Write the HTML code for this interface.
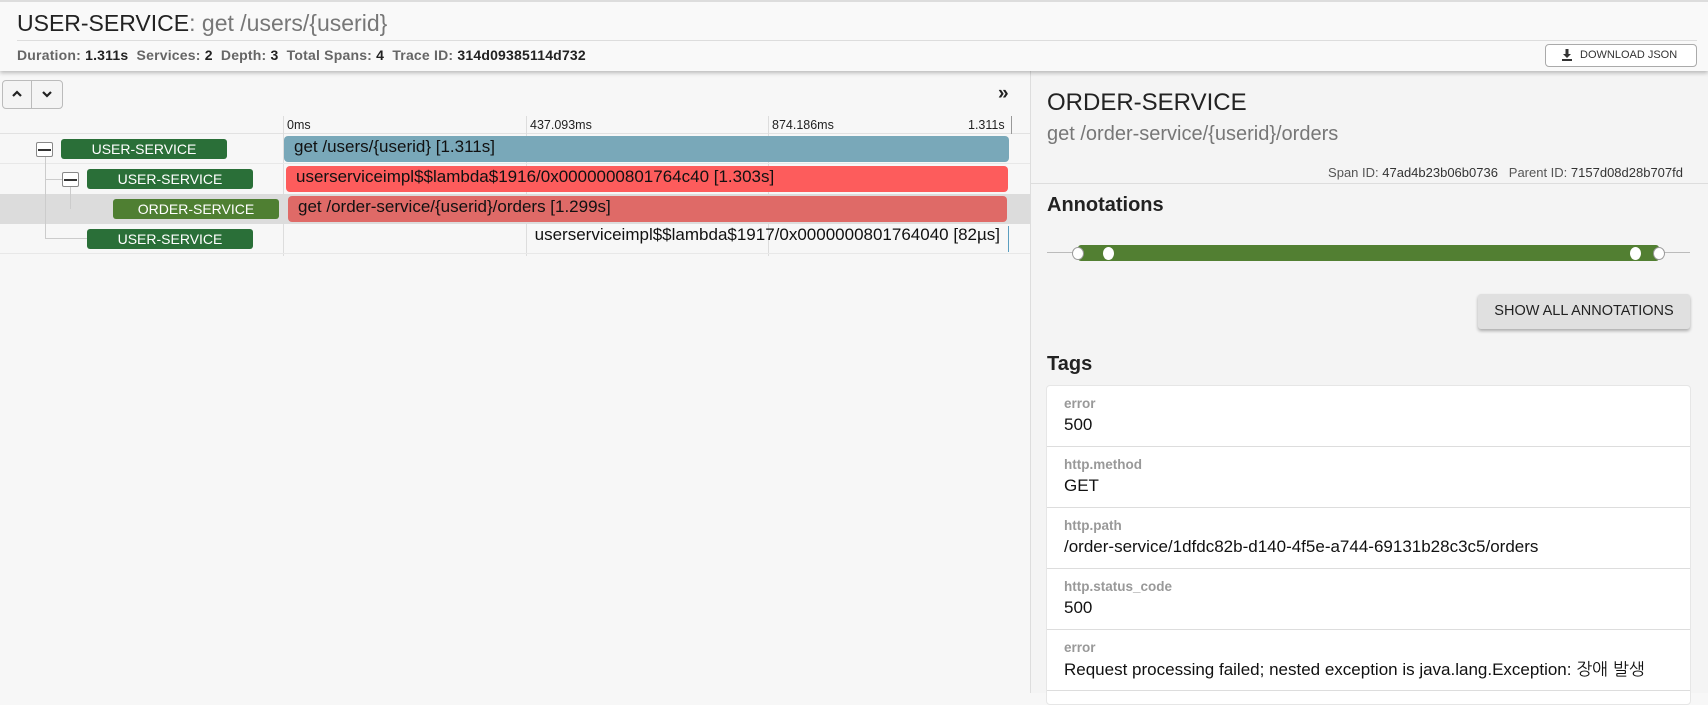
<!DOCTYPE html>
<html><head><meta charset="utf-8"><style>
*{box-sizing:border-box;margin:0;padding:0}
body{width:1708px;height:693px;overflow:hidden;background:#f7f7f7;font-family:"Liberation Sans","NanumGothic",sans-serif;color:#222;position:relative}
.a{position:absolute}
.hdr{left:0;top:0;width:1708px;height:71px;background:#f9f9f9;border-top:2px solid #ddd;box-shadow:0 2px 4px rgba(0,0,0,.25);z-index:2}
.lbl{height:20px;border-radius:3px;color:#fff;font-size:14px;text-align:center;line-height:20px;background:#2a6f38}
.box{width:17px;height:15px;border:1px solid #888;background:#fff;border-radius:2px}
.box:after{content:"";position:absolute;left:1px;right:1px;top:6px;height:2px;background:#333}
.bar{height:26px;border-radius:4px;font-size:17px;line-height:22px;padding-left:10px;color:#111;white-space:nowrap}
.tl{font-size:12.5px;color:#222}
.row{height:61px;border-bottom:1px solid #ddd;padding:10px 0 0 17px;position:relative}
.row .k{font-size:13.5px;color:#999;font-weight:bold}
.row .v{font-size:17px;color:#111;margin-top:4px;white-space:nowrap}
</style></head><body>
<div class="a hdr">
 <div class="a" style="left:17px;top:8px;font-size:23px;color:#222">USER-SERVICE<span style="color:#777">: get /users/{userid}</span></div>
 <div class="a" style="left:17px;top:38px;width:1680px;height:1px;background:#ddd"></div>
 <div class="a" style="left:17px;top:45px;font-size:14px;color:#666;font-weight:bold;white-space:nowrap;letter-spacing:.2px">Duration: <span style="color:#222">1.311s</span>&nbsp; Services: <span style="color:#222">2</span>&nbsp; Depth: <span style="color:#222">3</span>&nbsp; Total Spans: <span style="color:#222">4</span>&nbsp; Trace ID: <span style="color:#222">314d09385114d732</span></div>
 <div class="a" style="left:1545px;top:42px;width:152px;height:23px;border:1px solid #aaa;border-radius:4px;background:#fff;font-size:11px;line-height:21px;padding-left:34px;color:#333">DOWNLOAD JSON</div>
 <svg class="a" style="left:1562px;top:47px" width="10" height="12" viewBox="0 0 10 12"><path d="M3.5 0h3v5h2.5L5 9 1 5h2.5z M0 10h10v2H0z" fill="#333"/></svg>
</div>
<div class="a" style="left:0;top:71px;width:1030px;height:622px;background:#f7f7f7"></div>
<div class="a" style="left:2px;top:80px;width:61px;height:29px;border:1px solid #bbb;border-radius:4px;background:#f4f4f4"></div>
<div class="a" style="left:31px;top:80px;width:1px;height:29px;background:#bbb"></div>
<svg class="a" style="left:11px;top:89px" width="12" height="10"><path d="M2 7l4-4 4 4" stroke="#222" stroke-width="2.2" fill="none"/></svg>
<svg class="a" style="left:41px;top:89px" width="12" height="10"><path d="M2 3l4 4 4-4" stroke="#222" stroke-width="2.2" fill="none"/></svg>
<div class="a" style="left:998px;top:83px;font-size:19px;font-weight:bold;color:#222">»</div>
<div class="a" style="left:0;top:133px;width:1030px;height:1px;background:#e2e2e2"></div>
<div class="a" style="left:283px;top:116px;width:1px;height:140px;background:#ddd"></div>
<div class="a" style="left:526px;top:116px;width:1px;height:140px;background:#ddd"></div>
<div class="a" style="left:768px;top:116px;width:1px;height:140px;background:#ddd"></div>
<div class="a" style="left:1011px;top:116px;width:1px;height:18px;background:#999"></div>
<div class="a tl" style="left:287px;top:118px">0ms</div>
<div class="a tl" style="left:530px;top:118px">437.093ms</div>
<div class="a tl" style="left:772px;top:118px">874.186ms</div>
<div class="a tl" style="left:968px;top:118px">1.311s</div>
<div class="a" style="left:0;top:194px;width:1030px;height:30px;background:#dcdcdc"></div>
<div class="a" style="left:0;top:163px;width:1030px;height:1px;background:#e8e8e8"></div>
<div class="a" style="left:0;top:253px;width:1030px;height:1px;background:#e8e8e8"></div>
<div class="a" style="left:45px;top:157px;width:1px;height:82px;background:#ccc"></div>
<div class="a" style="left:45px;top:179px;width:20px;height:1px;background:#ccc"></div>
<div class="a" style="left:45px;top:238px;width:42px;height:1px;background:#ccc"></div>
<div class="a" style="left:70px;top:187px;width:1px;height:22px;background:#ccc"></div>
<div class="a box" style="left:36px;top:142px"></div>
<div class="a box" style="left:62px;top:172px"></div>
<div class="a lbl" style="left:61px;top:139px;width:166px">USER-SERVICE</div>
<div class="a lbl" style="left:87px;top:169px;width:166px">USER-SERVICE</div>
<div class="a lbl" style="left:113px;top:199px;width:166px;background:#4f7f32">ORDER-SERVICE</div>
<div class="a lbl" style="left:87px;top:229px;width:166px">USER-SERVICE</div>
<div class="a bar" style="left:284px;top:136px;width:725px;background:#79a8b9">get /users/{userid} [1.311s]</div>
<div class="a bar" style="left:286px;top:166px;width:722px;background:#fd5c5c">userserviceimpl$$lambda$1916/0x0000000801764c40 [1.303s]</div>
<div class="a bar" style="left:288px;top:196px;width:719px;background:#df6a67">get /order-service/{userid}/orders [1.299s]</div>
<div class="a" style="left:300px;top:225px;width:700px;text-align:right;font-size:17px;color:#111;white-space:nowrap">userserviceimpl$$lambda$1917/0x0000000801764040 [82µs]</div>
<div class="a" style="left:1008px;top:226px;width:1px;height:26px;background:#5a9ec0"></div>
<div class="a" style="left:1030px;top:71px;width:678px;height:622px;background:#f4f4f4;border-left:1px solid #ddd"></div>
<div class="a" style="left:1047px;top:89px;font-size:24px;color:#222">ORDER-SERVICE</div>
<div class="a" style="left:1047px;top:123px;font-size:20px;color:#777">get /order-service/{userid}/orders</div>
<div class="a" style="left:1100px;top:165px;text-align:right;font-size:13px;color:#555;width:583px;white-space:nowrap">Span ID:<span style="color:#333"> 47ad4b23b06b0736</span>&nbsp;&nbsp; Parent ID:<span style="color:#333"> 7157d08d28b707fd</span></div>
<div class="a" style="left:1031px;top:183px;width:677px;height:1px;background:#ddd"></div>
<div class="a" style="left:1047px;top:194px;font-size:20px;font-weight:bold;color:#222">Annotations</div>
<div class="a" style="left:1047px;top:252px;width:643px;height:1px;background:#bbb"></div>
<div class="a" style="left:1078px;top:245px;width:581px;height:16px;background:#527f32;border-radius:3px"></div>
<div class="a" style="left:1072px;top:247px;width:12px;height:13px;border-radius:50%;background:#fff;border:1px solid #999"></div>
<div class="a" style="left:1103px;top:247px;width:11px;height:13px;border-radius:50%;background:#fff"></div>
<div class="a" style="left:1630px;top:247px;width:11px;height:13px;border-radius:50%;background:#fff"></div>
<div class="a" style="left:1653px;top:247px;width:12px;height:13px;border-radius:50%;background:#fff;border:1px solid #999"></div>
<div class="a" style="left:1478px;top:294px;width:212px;height:35px;background:#e0e0e0;border-radius:3px;box-shadow:0 2px 3px rgba(0,0,0,.3);font-size:14.5px;text-align:center;line-height:35px;color:#222;white-space:nowrap">SHOW ALL ANNOTATIONS</div>
<div class="a" style="left:1047px;top:353px;font-size:20px;font-weight:bold;color:#222">Tags</div>
<div class="a" style="left:1046px;top:385px;width:645px;height:320px;background:#fff;border:1px solid #e6e6e6;border-radius:4px">
 <div class="row"><div class="k">error</div><div class="v">500</div></div>
 <div class="row"><div class="k">http.method</div><div class="v">GET</div></div>
 <div class="row"><div class="k">http.path</div><div class="v">/order-service/1dfdc82b-d140-4f5e-a744-69131b28c3c5/orders</div></div>
 <div class="row"><div class="k">http.status_code</div><div class="v">500</div></div>
 <div class="row"><div class="k">error</div><div class="v">Request processing failed; nested exception is java.lang.Exception: 장애 발생</div></div>
</div>
</body></html>
